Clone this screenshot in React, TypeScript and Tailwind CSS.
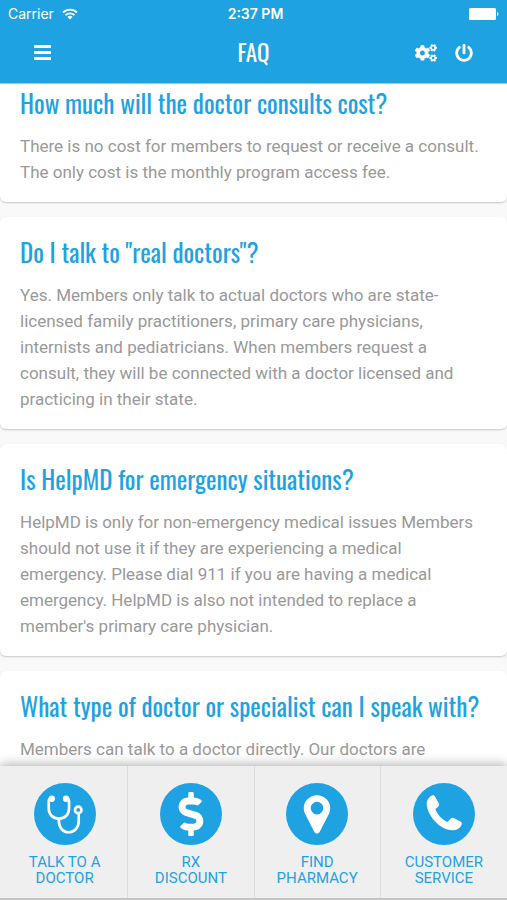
import type { ReactNode } from "react";
import { FaCogs, FaDollarSign, FaPowerOff } from "react-icons/fa";

const faqs = [
  {
    question: "How much will the doctor consults cost?",
    answer:
      "There is no cost for members to request or receive a consult. The only cost is the monthly program access fee.",
  },
  {
    question: 'Do I talk to "real doctors"?',
    answer:
      "Yes. Members only talk to actual doctors who are state-licensed family practitioners, primary care physicians, internists and pediatricians. When members request a consult, they will be connected with a doctor licensed and practicing in their state.",
  },
  {
    question: "Is HelpMD for emergency situations?",
    answer:
      "HelpMD is only for non-emergency medical issues Members should not use it if they are experiencing a medical emergency. Please dial 911 if you are having a medical emergency. HelpMD is also not intended to replace a member's primary care physician.",
  },
  {
    question: "What type of doctor or specialist can I speak with?",
    answer: "Members can talk to a doctor directly. Our doctors are",
  },
];

function Stethoscope() {
  return (
    <svg viewBox="0 0 61 61" className="size-full" fill="none" stroke="currentColor" strokeWidth="2.600" strokeLinecap="round">
      <path d="M17 15c-2 0-2.500 1-2.500 3v7c0 6 4 10 10 10s10-4 10-10v-7c0-2-.5-3-2.500-3" />
      <path d="M24.500 35v3c0 6 4 10.500 9.500 10.500s10-4.500 10-10.500v-8" />
      <circle cx="43.500" cy="26.500" r="3.200" />
      <circle cx="17.500" cy="15.500" r="1.800" fill="currentColor" />
      <circle cx="31.500" cy="15.500" r="1.800" fill="currentColor" />
    </svg>
  );
}

function Pin() {
  return (
    <svg viewBox="0 0 61 61" className="size-full" fill="currentColor" fillRule="evenodd">
      <path d="M30.500 12C23.500 12 17.500 17.500 17.500 24.500c0 2.500.6 4.500 1.700 6.700l8.600 16.700c1.200 2.300 4.200 2.300 5.400 0l8.600-16.700c1.100-2.200 1.700-4.200 1.700-6.700C43.500 17.500 37.500 12 30.500 12zm0 6.500a6.200 6.200 0 1 1 0 12.400a6.200 6.200 0 0 1 0-12.400z" />
    </svg>
  );
}

function Phone() {
  return (
    <svg viewBox="0 0 61 61" className="size-full" fill="currentColor">
      <path d="M18.700 12.200c1.200-.5 2.200-.2 2.800.8l4 7.200c.6 1 .3 2-.6 2.800l-2.900 2.500c1.700 5.300 6.700 10.500 11.800 12.800l3.400-3.400c.8-.8 1.900-.9 2.900-.4l6.900 3.700c1 .6 1.300 1.500.9 2.600-1.300 3.600-4.900 5.700-9.200 5.700C26 46.500 13.500 31 13.500 20.500c0-4 2.300-7 5.200-8.300z" />
    </svg>
  );
}

const tabs: { lines: string[]; icon: ReactNode }[] = [
  { lines: ["TALK TO A", "DOCTOR"], icon: <Stethoscope /> },
  { lines: ["RX", "DISCOUNT"], icon: <FaDollarSign className="size-11" /> },
  { lines: ["FIND", "PHARMACY"], icon: <Pin /> },
  { lines: ["CUSTOMER", "SERVICE"], icon: <Phone /> },
];

export default function App() {
  return (
    <div className="flex h-screen flex-col overflow-hidden bg-[#f9f9f9] font-['Roboto',sans-serif]">
      <header className="z-10 shrink-0 border-b border-[#8fd0f0] bg-[#1fa2e1] text-white">
        {/* Status bar */}
        <div className="grid h-7 grid-cols-3 items-center px-2 font-['Inter',sans-serif]">
          <div className="flex items-center gap-2">
            <span className="text-sm">Carrier</span>
            <svg viewBox="0 0 16 12" className="h-3 w-4" fill="none" stroke="currentColor" strokeWidth="1.800">
              <path d="M1 4.500a10 10 0 0 1 14 0M3.500 7.200a6.400 6.400 0 0 1 9 0" />
              <path d="M8 11.500L5.500 9a3.500 3.500 0 0 1 5 0z" fill="currentColor" stroke="none" />
            </svg>
          </div>
          <span className="pl-1 text-center text-sm font-semibold">2:37 PM</span>
          <svg viewBox="0 0 30 12" className="h-3 w-[30px] justify-self-end" fill="currentColor">
            <rect width="27" height="12" rx="1.500" />
            <path d="M28 4c2 .5 2 3.500 0 4z" />
          </svg>
        </div>

        <div className="grid h-[55px] grid-cols-3 items-center px-8 pb-1.5">
          <button type="button" aria-label="Menu" className="w-5 justify-self-start">
            <svg viewBox="0 0 20 20" className="size-5" fill="currentColor">
              <rect x="2" y="2" width="17" height="3" rx=".5" />
              <rect x="2" y="8" width="17" height="3" rx=".5" />
              <rect x="2" y="14" width="17" height="3" rx=".5" />
            </svg>
          </button>
          <h1 className="text-center font-['Oswald','Roboto_Condensed','Liberation_Sans_Narrow',sans-serif] text-[23px]">
            FAQ
          </h1>
          <div className="flex items-center gap-[18px] justify-self-end pr-0.5">
            <button type="button" aria-label="Settings">
              <FaCogs className="size-[22px]" />
            </button>
            <button type="button" aria-label="Log out">
              <FaPowerOff className="size-[18px]" />
            </button>
          </div>
        </div>
      </header>

      <main className="min-h-0 flex-1 overflow-hidden">
        <div className="-mt-4 flex flex-col gap-[15px]">
          {faqs.map((faq) => (
            <article key={faq.question} className="rounded-md bg-white px-5 pt-[17px] pb-[17px] shadow-[0_1px_2px_rgba(0,0,0,0.2)]">
              <h2 className="mb-3 font-['Oswald','Roboto_Condensed','Liberation_Sans_Narrow',sans-serif] text-[25px] leading-9 font-normal whitespace-nowrap text-[#1fa2e1]">
                {faq.question}
              </h2>
              <p className="text-[17px] leading-[26px] text-[#999]">{faq.answer}</p>
            </article>
          ))}
        </div>
      </main>

      <nav className="z-10 grid shrink-0 grid-cols-4 divide-x divide-[#dcdcdc] border-b-2 border-[#c4c4c4] bg-[#efefef] pl-0.5 shadow-[0_0_12px_rgba(0,0,0,0.4)]">
        {tabs.map((tab) => (
          <a key={tab.lines[0]} href="#" className="flex flex-col items-center pt-[17px] pb-3 text-[15px] leading-4 text-[#1fa2e1]">
            <span className="mb-[9px] flex size-[62px] items-center justify-center rounded-full bg-[#1fa2e1] text-white">
              {tab.icon}
            </span>
            {tab.lines.map((line) => (
              <span key={line}>{line}</span>
            ))}
          </a>
        ))}
      </nav>
    </div>
  );
}
